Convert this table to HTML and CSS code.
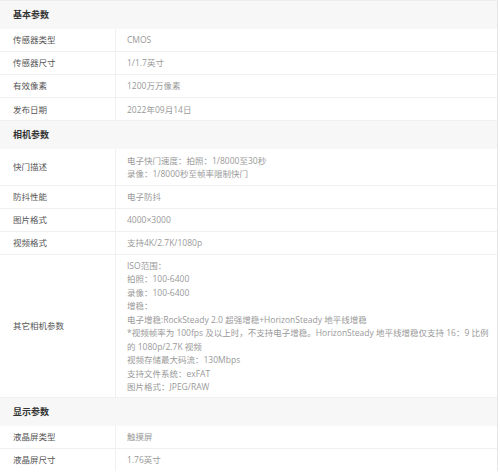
FILE: index.html
```html
<!DOCTYPE html>
<html lang="zh-CN">
<head>
<meta charset="utf-8">
<title>参数</title>
<link rel="stylesheet" href="styles.css">
</head>
<body>
<div class="spec">
  <div class="group">基本参数</div>
  <div class="row"><div class="label">传感器类型</div><div class="value">CMOS</div></div>
  <div class="row"><div class="label">传感器尺寸</div><div class="value">1/1.7英寸</div></div>
  <div class="row"><div class="label">有效像素</div><div class="value">1200万万像素</div></div>
  <div class="row"><div class="label">发布日期</div><div class="value">2022年09月14日</div></div>

  <div class="group">相机参数</div>
  <div class="row"><div class="label">快门描述</div><div class="value">电子快门速度：拍照：1/8000至30秒<br>录像：1/8000秒至帧率限制快门</div></div>
  <div class="row"><div class="label">防抖性能</div><div class="value">电子防抖</div></div>
  <div class="row"><div class="label">图片格式</div><div class="value">4000×3000</div></div>
  <div class="row"><div class="label">视频格式</div><div class="value">支持4K/2.7K/1080p</div></div>
  <div class="row row-tall"><div class="label">其它相机参数</div><div class="value">ISO范围：<br>拍照：100-6400<br>录像：100-6400<br>增稳：<br>电子增稳:RockSteady 2.0 超强增稳+HorizonSteady 地平线增稳<br>*视频帧率为 100fps 及以上时，不支持电子增稳。HorizonSteady 地平线增稳仅支持 16：9 比例的 1080p/2.7K 视频<br>视频存储最大码流：130Mbps<br>支持文件系统：exFAT<br>图片格式：JPEG/RAW</div></div>

  <div class="group">显示参数</div>
  <div class="row"><div class="label">液晶屏类型</div><div class="value">触摸屏</div></div>
  <div class="row"><div class="label">液晶屏尺寸</div><div class="value">1.76英寸</div></div>
</div>
</body>
</html>
```
FILE: styles.css
```css
html, body {
  margin: 0;
  padding: 0;
  background: #fff;
}
.spec {
  width: 497px;
  border-top: 1px solid #ececec;
  border-right: 1px solid #e6e6e6;
  font-family: "Open Sans", "Noto Sans CJK SC", sans-serif;
  font-size: 8.5px;
  line-height: 13.5px;
}
.group {
  height: 28px;
  line-height: 28px;
  padding-left: 13px;
  background: #f7f7f7;
  color: #333;
  font-size: 9px;
  font-weight: 600;
}
.row {
  display: grid;
  grid-template-columns: 116px 1fr;
  border-bottom: 1px solid #f0f0f0;
}
.row:last-child {
  border-bottom: none;
}
.label {
  display: flex;
  align-items: center;
  padding: 4.3px 0 4.3px 13px;
  border-right: 1px solid #f0f0f0;
  color: #555;
}
.value {
  padding: 4.3px 3px 4.3px 11px;
  color: #999;
}
.row-tall .value {
  padding-top: 3.3px;
  padding-bottom: 3.3px;
}
```
